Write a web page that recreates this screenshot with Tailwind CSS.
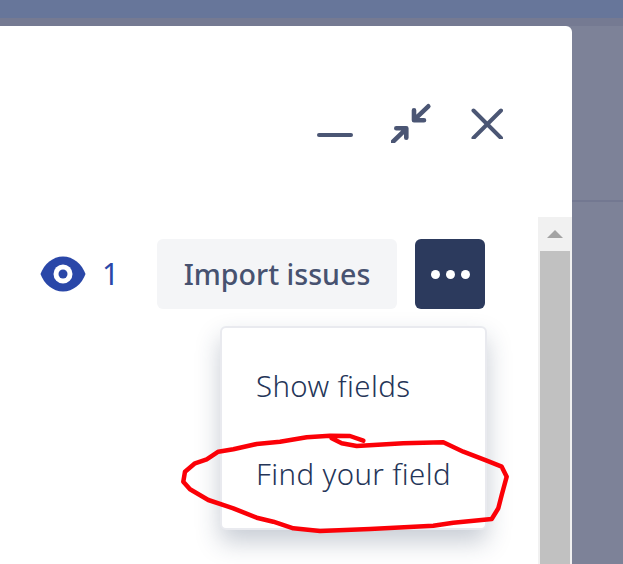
<!DOCTYPE html>
<html lang="en">
<head>
  <meta charset="UTF-8" />
  <meta name="viewport" content="width=device-width, initial-scale=1.0" />
  <title>Issue modal</title>
  <script src="https://cdn.jsdelivr.net/npm/@tailwindcss/browser@4"></script>
</head>
<body class="relative w-[623px] h-[564px] overflow-hidden bg-[#7d8298] font-['Noto_Sans',sans-serif]">

  <!-- Dimmed top bar -->
  <div class="h-[18px] bg-[#67769a]"></div>
  <div class="h-[8px] bg-[#757a92]"></div>

  <div class="flex">
    <!-- Modal -->
    <div class="relative w-[572px] h-[538px] shrink-0 bg-white rounded-tr-[6px]">

      <!-- Window controls -->
      <div class="flex justify-end items-start pt-[76px] pr-[69px]">
        <svg width="36" height="36" viewBox="0 0 36 36" class="mr-[38px] mt-[1px]" fill="none" stroke="#4b5674" stroke-width="4" stroke-linecap="round">
          <path d="M2 32h32" />
        </svg>
        <svg width="42" height="40" viewBox="0 0 42 40" class="mr-[38px] mt-[1px]" fill="none" stroke="#4b5674" stroke-width="4.6" stroke-linecap="round" stroke-linejoin="round">
          <path d="M37.3 3.3 24.7 15.3M23 7.3v10h10" />
          <path d="M2 38.7 14.7 26.3M5.3 25.3h10v9.4" />
        </svg>
        <svg width="32" height="32" viewBox="0 0 32 32" class="mt-[5px]" fill="none" stroke="#4b5674" stroke-width="4" stroke-linecap="round">
          <path d="M2.5 3.5 30 31M30 3.5 2.5 31" />
        </svg>
      </div>

      <!-- Actions row -->
      <div class="flex items-center mt-[96px] pl-[40px]">
        <svg width="46" height="36" viewBox="0 0 46 36">
          <path fill="#2a47a8" d="M0.5 18C4 8 13 0.5 23 0.5S42 8 45.5 18C42 28 33 35.5 23 35.5S4 28 0.5 18Z" />
          <circle cx="23" cy="18" r="9.5" fill="#fff" />
          <circle cx="23" cy="18" r="4.5" fill="#2a47a8" />
        </svg>
        <span class="ml-[16px] w-[55px] text-[30px] leading-none text-[#2a47a8]">1</span>
        <button class="w-[240px] h-[70px] rounded-[6px] bg-[#f4f5f7] text-[28.6px] font-medium text-[#475270]">Import issues</button>
        <button class="flex items-center justify-center gap-[6px] w-[70px] h-[70px] ml-[18px] rounded-[6px] bg-[#2c3a5d]">
          <span class="w-[9px] h-[9px] rounded-full bg-white"></span>
          <span class="w-[9px] h-[9px] rounded-full bg-white"></span>
          <span class="w-[9px] h-[9px] rounded-full bg-white"></span>
        </button>
      </div>

      <!-- Scrollbar -->
      <div class="absolute left-[538px] top-[191px] bottom-0 w-[34px] flex flex-col items-center bg-[#f1f1f1]">
        <div class="h-[34px] flex items-center justify-center">
          <div class="w-0 h-0 border-x-[8px] border-x-transparent border-b-[8px] border-b-[#a3a3a3]"></div>
        </div>
        <div class="flex-1 w-[30px] bg-[#c1c1c1]"></div>
      </div>

      <!-- Dropdown menu -->
      <div class="absolute left-[220px] top-[300px] w-[267px] h-[204px] flex flex-col justify-center pt-[4px] bg-white rounded-[6px] border-2 border-[#e9eaef] shadow-[0_12px_24px_rgba(37,56,88,0.25)] text-[29.4px] tracking-[0.4px] font-[350] text-[#253558]">
        <div class="h-[88px] flex items-center pl-[34px]">Show fields</div>
        <div class="h-[88px] flex items-center pl-[34px]">Find your field</div>
      </div>
    </div>

    <!-- Dimmed page behind the modal -->
    <div class="flex-1">
      <div class="h-[176px] border-b-2 border-[#737891]"></div>
    </div>
  </div>

  <!-- Red hand-drawn annotation -->
  <svg class="absolute left-0 top-0" width="623" height="564" viewBox="0 0 623 564" fill="none" stroke="#fb0007" stroke-width="4.5" stroke-linecap="round" stroke-linejoin="round">
    <path d="M363.3 440.7 350 436 330 435.7 306.7 437.3 280 441.7 256.7 444 233.3 449.3 218.3 451.7 206.7 459.3 195 463.3 185 471.7 183.3 481.7 190 489.3 208.3 500 233.3 508.3 256.7 517.7 273.3 521.7 293.3 528.3 320 531 370 529 433.3 525.7 453.3 522.7 491.7 519 498.3 508.3 501.7 495 506.7 476.7 501.7 466.7 486.7 460.7 463.3 451.7 443.3 442.3 403.3 443.3 356.7 446 341.7 443.3 331.7 438.3" />
  </svg>

</body>
</html>
